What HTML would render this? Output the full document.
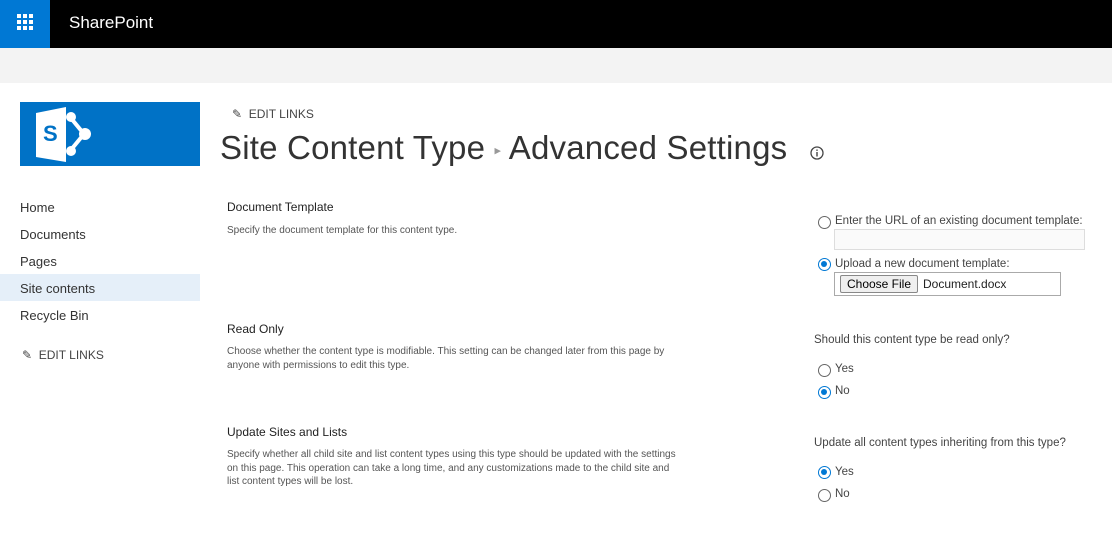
<!DOCTYPE html><html><head><style>
body{margin:0;width:1112px;height:558px;position:relative;font-family:"Liberation Sans",sans-serif;background:#fff;overflow:hidden;color:#333}
.a{position:absolute;white-space:nowrap}
.r{position:absolute;border:1px solid #666;border-radius:50%;box-sizing:border-box;width:13px;height:13px}
.r.on{border:1.5px solid #0078d4}
.r.on:after{content:"";position:absolute;left:2px;top:2px;width:6px;height:6px;border-radius:50%;background:#0078d4}
.sm{font-size:10px;color:#555;line-height:13.5px}
.h{font-size:12px;color:#222}
.q{font-size:11.5px;color:#444}
</style></head><body>
<div class="a" style="left:0;top:0;width:1112px;height:48px;background:#000"></div>
<div class="a" style="left:0;top:0;width:50px;height:48px;background:#0078d4"></div>
<svg class="a" style="left:17px;top:14px" width="17" height="17"><g fill="#fff"><rect x="0" y="0" width="4" height="4"/><rect x="6" y="0" width="4" height="4"/><rect x="12" y="0" width="4" height="4"/><rect x="0" y="6" width="4" height="4"/><rect x="6" y="6" width="4" height="4"/><rect x="12" y="6" width="4" height="4"/><rect x="0" y="12" width="4" height="4"/><rect x="6" y="12" width="4" height="4"/><rect x="12" y="12" width="4" height="4"/></g></svg>
<div class="a" style="left:69px;top:13px;font-size:17px;color:#fff">SharePoint</div>
<div class="a" style="left:0;top:48px;width:1112px;height:35px;background:#f3f3f3"></div>
<div class="a" style="left:20px;top:102px;width:180px;height:64px;background:#0072c6"></div>
<svg class="a" style="left:36px;top:107px" width="58" height="55"><path d="M0 6 L30 0 L30 55 L0 50Z" fill="#fff"/><text x="7" y="34" font-size="22" font-weight="bold" fill="#0072c6" font-family="Liberation Sans">S</text><path d="M34 10 L48 27 L34 44" stroke="#fff" stroke-width="4" fill="none"/><circle cx="35" cy="10" r="5" fill="#fff"/><circle cx="49" cy="27" r="6" fill="#fff"/><circle cx="35" cy="44" r="5" fill="#fff"/></svg>
<div class="a" style="left:232px;top:107px;font-size:12px;color:#444">✎&nbsp; EDIT LINKS</div>
<div class="a" style="left:220px;top:129px;font-size:33px;font-weight:300;color:#333;letter-spacing:0.2px">Site Content Type <span style="font-size:13px;color:#999;vertical-align:middle">&#9656;</span> Advanced Settings</div>
<svg class="a" style="left:810px;top:146px" width="14" height="14"><circle cx="7" cy="7" r="6" stroke="#444" stroke-width="1.3" fill="none"/><rect x="6.3" y="6" width="1.4" height="4.5" fill="#444"/><rect x="6.3" y="3.5" width="1.4" height="1.4" fill="#444"/></svg>
<div class="a" style="left:0;top:274px;width:200px;height:27px;background:#e5eff9"></div>
<div class="a" style="left:20px;top:194px;font-size:13px;line-height:27px;color:#333">Home<br>Documents<br>Pages<br>Site contents<br>Recycle Bin</div>
<div class="a" style="left:22px;top:348px;font-size:12px;color:#444">✎&nbsp; EDIT LINKS</div>
<div class="a h" style="left:227px;top:200px">Document Template</div>
<div class="a sm" style="left:227px;top:224px">Specify the document template for this content type.</div>
<div class="a h" style="left:227px;top:322px">Read Only</div>
<div class="a sm" style="left:227px;top:345px">Choose whether the content type is modifiable. This setting can be changed later from this page by<br>anyone with permissions to edit this type.</div>
<div class="a h" style="left:227px;top:425px">Update Sites and Lists</div>
<div class="a sm" style="left:227px;top:448px">Specify whether all child site and list content types using this type should be updated with the settings<br>on this page. This operation can take a long time, and any customizations made to the child site and<br>list content types will be lost.</div>
<div class="r" style="left:818px;top:216px"></div>
<div class="a q" style="left:835px;top:215px">Enter the URL of an existing document template:</div>
<div class="a" style="left:834px;top:229px;width:251px;height:21px;border:1px solid #ddd;background:#fafafa;box-sizing:border-box"></div>
<div class="r on" style="left:818px;top:258px"></div>
<div class="a q" style="left:835px;top:258px">Upload a new document template:</div>
<div class="a" style="left:834px;top:272px;width:227px;height:24px;border:1px solid #aaa;box-sizing:border-box"></div>
<div class="a" style="left:840px;top:275px;width:78px;height:18px;border:1px solid #888;border-radius:2px;background:#efefef;box-sizing:border-box;font-size:12px;color:#000;text-align:center;line-height:16px">Choose File</div>
<div class="a" style="left:923px;top:277px;font-size:12px;color:#222">Document.docx</div>
<div class="a q" style="left:814px;top:334px">Should this content type be read only?</div>
<div class="r" style="left:818px;top:364px"></div><div class="a q" style="left:835px;top:363px">Yes</div>
<div class="r on" style="left:818px;top:386px"></div><div class="a q" style="left:835px;top:385px">No</div>
<div class="a q" style="left:814px;top:437px">Update all content types inheriting from this type?</div>
<div class="r on" style="left:818px;top:466px"></div><div class="a q" style="left:835px;top:466px">Yes</div>
<div class="r" style="left:818px;top:489px"></div><div class="a q" style="left:835px;top:488px">No</div>
</body></html>
